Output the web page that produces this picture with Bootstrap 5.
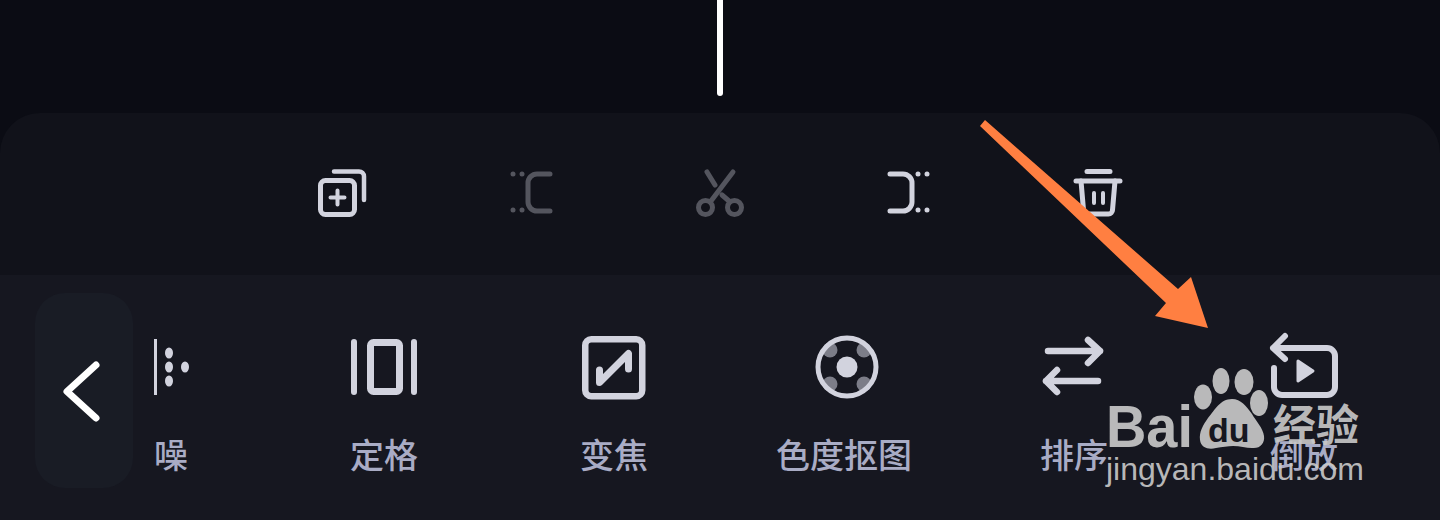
<!DOCTYPE html>
<html lang="zh-CN">
<head>
    <meta charset="UTF-8">
    <meta name="viewport" content="width=device-width, initial-scale=1.0">
    <title>剪辑工具栏</title>
    <link href="https://cdn.jsdelivr.net/npm/bootstrap@5.3.0/dist/css/bootstrap.min.css" rel="stylesheet">
    <style>
        body {
            width: 1440px;
            height: 520px;
            background-color: #0b0c14;
            font-family: "Noto Sans CJK SC", "Liberation Sans", sans-serif;
        }
        .playhead-wrap {
            height: 113px;
        }
        .playhead {
            width: 6px;
            height: 96px;
            background-color: #fff;
            border-radius: 0 0 3px 3px;
        }
        .edit-panel {
            height: 407px;
            background-color: #11121a;
            border-radius: 40px 40px 0 0;
        }
        .clip-tools {
            height: 162px;
            padding-top: 56px;
            gap: 141px;
        }
        .tool-icon {
            width: 48px;
            height: 48px;
            overflow: visible;
            fill: none;
            stroke: #d2d3de;
            stroke-width: 5;
            stroke-linecap: round;
            stroke-linejoin: round;
        }
        .tool-icon.is-off {
            stroke: #54555e;
        }
        .dot-fill {
            stroke: none;
            fill: #d2d3de;
        }
        .is-off .dot-fill {
            fill: #54555e;
        }
        .effect-bar {
            height: 245px;
            padding: 18px 0 0 35px;
            background-color: #161720;
        }
        .back-btn {
            width: 98px;
            height: 195px;
            background-color: #191c25;
            border-radius: 30px;
        }
        .back-btn svg {
            width: 98px;
            height: 195px;
        }
        .effect-scroll {
            margin-left: 21px;
        }
        .effect-list {
            margin-left: -115px;
        }
        .effect-item {
            flex: 0 0 230px;
            padding-top: 42px;
        }
        .effect-icon {
            width: 64px;
            height: 64px;
            overflow: visible;
            fill: none;
            stroke: #d2d3de;
            stroke-width: 6.500;
            stroke-linecap: round;
            stroke-linejoin: round;
        }
        .chroma-icon {
            margin-left: 6px;
        }
        .effect-label {
            margin-top: 35px;
            font-size: 34px;
            line-height: 40px;
            font-weight: 500;
            color: #a9acc5;
            white-space: nowrap;
        }
        .overlay-art {
            width: 1440px;
            height: 520px;
            pointer-events: none;
        }
        .wm-latin {
            font-family: "Liberation Sans", sans-serif;
        }
        .wm-cjk {
            font-family: "Noto Sans CJK SC", sans-serif;
        }
    </style>
</head>
<body class="position-relative overflow-hidden">
    <div class="playhead-wrap d-flex justify-content-center">
        <div class="playhead"></div>
    </div>

    <div class="edit-panel d-flex flex-column">
        <!-- clip actions -->
        <div class="clip-tools d-flex justify-content-center align-items-start">
            <svg class="tool-icon" viewBox="0 0 48 48">
                <rect x="2.500" y="11.500" width="34" height="34" rx="5"/>
                <path d="M16 2.500H41a5 5 0 0 1 5 5V31" stroke-width="4.500"/>
                <path d="M19.500 21.500V35.500M12.500 28.500H26.500" stroke-width="4"/>
            </svg>
            <svg class="tool-icon is-off" viewBox="0 0 48 48">
                <path d="M43 5H30a9 9 0 0 0-9 9V33a9 9 0 0 0 9 9H43"/>
                <circle class="dot-fill" cx="6" cy="5" r="2.500"/><circle class="dot-fill" cx="15" cy="5" r="2.500"/>
                <circle class="dot-fill" cx="6" cy="41" r="2.500"/><circle class="dot-fill" cx="15" cy="41" r="2.500"/>
            </svg>
            <svg class="tool-icon is-off" viewBox="0 0 48 48">
                <circle cx="9.500" cy="38.500" r="7"/><circle cx="38.500" cy="38.500" r="7"/>
                <path d="M37 3L15 32M11 3L19 16M26 26L33 32"/>
            </svg>
            <svg class="tool-icon" viewBox="0 0 48 48">
                <g transform="matrix(-1 0 0 1 48 0)">
                    <path d="M43 5H30a9 9 0 0 0-9 9V33a9 9 0 0 0 9 9H43"/>
                    <circle class="dot-fill" cx="6" cy="5" r="2.500"/><circle class="dot-fill" cx="15" cy="5" r="2.500"/>
                    <circle class="dot-fill" cx="6" cy="41" r="2.500"/><circle class="dot-fill" cx="15" cy="41" r="2.500"/>
                </g>
            </svg>
            <svg class="tool-icon" viewBox="0 0 48 48">
                <path d="M13 2.500H36M2 12H46"/>
                <path d="M7 12L9.500 41a4 4 0 0 0 4 4H34.500a4 4 0 0 0 4-4L41 12"/>
                <path d="M20 24V34M29 24V34" stroke-width="4"/>
            </svg>
        </div>

        <!-- effect strip -->
        <div class="effect-bar d-flex align-items-start">
            <div class="back-btn flex-shrink-0">
                <svg viewBox="0 0 98 195" fill="none" stroke="#fff" stroke-width="7" stroke-linecap="round" stroke-linejoin="round">
                    <path d="M61 72L32 98.500L61 125"/>
                </svg>
            </div>
            <div class="effect-scroll flex-grow-1 overflow-hidden">
                <div class="effect-list d-flex">
                    <div class="effect-item d-flex flex-column align-items-center">
                        <svg class="effect-icon" viewBox="0 0 64 64">
                            <path d="M32 4V60" stroke-width="6" stroke-linecap="butt"/>
                            <g stroke="none" fill="#d2d3de">
                                <ellipse cx="47" cy="18" rx="4" ry="5.500"/>
                                <ellipse cx="47" cy="32" rx="4" ry="5.500"/>
                                <ellipse cx="47" cy="46" rx="4" ry="5.500"/>
                                <ellipse cx="63" cy="32" rx="4" ry="5.500"/>
                            </g>
                        </svg>
                        <div class="effect-label">降噪</div>
                    </div>
                    <div class="effect-item d-flex flex-column align-items-center">
                        <svg class="effect-icon" viewBox="0 0 64 64">
                            <path d="M2 7V57M62 7V57" stroke-width="6"/>
                            <rect x="18.500" y="7.500" width="29" height="49" rx="3" stroke-width="7"/>
                        </svg>
                        <div class="effect-label">定格</div>
                    </div>
                    <div class="effect-item d-flex flex-column align-items-center">
                        <svg class="effect-icon" viewBox="0 0 64 64">
                            <rect x="3.250" y="4.250" width="57" height="57" rx="6"/>
                            <path d="M17.500 35V47.500L46.500 18.500V34" stroke-width="7"/>
                        </svg>
                        <div class="effect-label">变焦</div>
                    </div>
                    <div class="effect-item d-flex flex-column align-items-center">
                        <svg class="effect-icon chroma-icon" viewBox="0 0 64 64">
                            <g stroke="none" fill="#7c7d88">
                                <circle cx="15" cy="15" r="7.500"/><circle cx="49" cy="15" r="7.500"/>
                                <circle cx="15" cy="49" r="7.500"/><circle cx="49" cy="49" r="7.500"/>
                            </g>
                            <circle cx="32" cy="32" r="29" stroke-width="5"/>
                            <circle cx="32" cy="32" r="10.500" stroke="none" fill="#d2d3de"/>
                        </svg>
                        <div class="effect-label">色度抠图</div>
                    </div>
                    <div class="effect-item d-flex flex-column align-items-center">
                        <svg class="effect-icon" viewBox="0 0 64 64">
                            <path d="M6 16H58M46 5L58 16L46 28"/>
                            <path d="M56 46H4M15 35L4 46L15 57"/>
                        </svg>
                        <div class="effect-label">排序</div>
                    </div>
                    <div class="effect-item d-flex flex-column align-items-center">
                        <svg class="effect-icon" viewBox="0 0 64 64">
                            <path d="M13 1L1 13L13 24M1 13H55a8 8 0 0 1 8 8V52a8 8 0 0 1-8 8H10a8 8 0 0 1-8-8V33" stroke-width="6"/>
                            <path d="M26 26L41 36L26 46Z" fill="#d2d3de" stroke-width="3"/>
                        </svg>
                        <div class="effect-label">倒放</div>
                    </div>
                </div>
            </div>
        </div>
    </div>

    <!-- annotation arrow and watermark lie over the page -->
    <svg class="overlay-art position-absolute top-0 start-0" viewBox="0 0 1440 520">
        <polygon fill="#ff7f41" points="985,120 1178,289 1191,277 1208,328 1155,316 1166,303 980,126"/>
        <g fill="#c8c8c8" fill-opacity="0.92">
            <text class="wm-latin" x="1106" y="447" font-size="60" font-weight="700" textLength="87" lengthAdjust="spacingAndGlyphs">Bai</text>
            <ellipse cx="1203" cy="397" rx="9" ry="12.500"/>
            <ellipse cx="1221" cy="381" rx="8.500" ry="13"/>
            <ellipse cx="1244" cy="382" rx="9.500" ry="13"/>
            <ellipse cx="1259" cy="403" rx="9" ry="13"/>
            <path d="M1232 399C1220 399 1215 410 1208 418C1203 425 1199 432 1200 440C1201 448 1209 450 1216 448C1222 447 1228 446 1233 446C1240 446 1246 448 1252 448C1260 449 1265 443 1264 436C1263 428 1256 421 1252 414C1246 406 1241 399 1232 399Z"/>
            <text class="wm-cjk" x="1273" y="441" font-size="43" font-weight="700">经验</text>
            <text class="wm-latin" x="1106" y="480" font-size="32">jingyan.baidu.com</text>
        </g>
        <text class="wm-latin" x="1208" y="442" font-size="34" font-weight="700" fill="#161720">du</text>
    </svg>

    <script src="https://cdn.jsdelivr.net/npm/bootstrap@5.3.0/dist/js/bootstrap.bundle.min.js"></script>
</body>
</html>
